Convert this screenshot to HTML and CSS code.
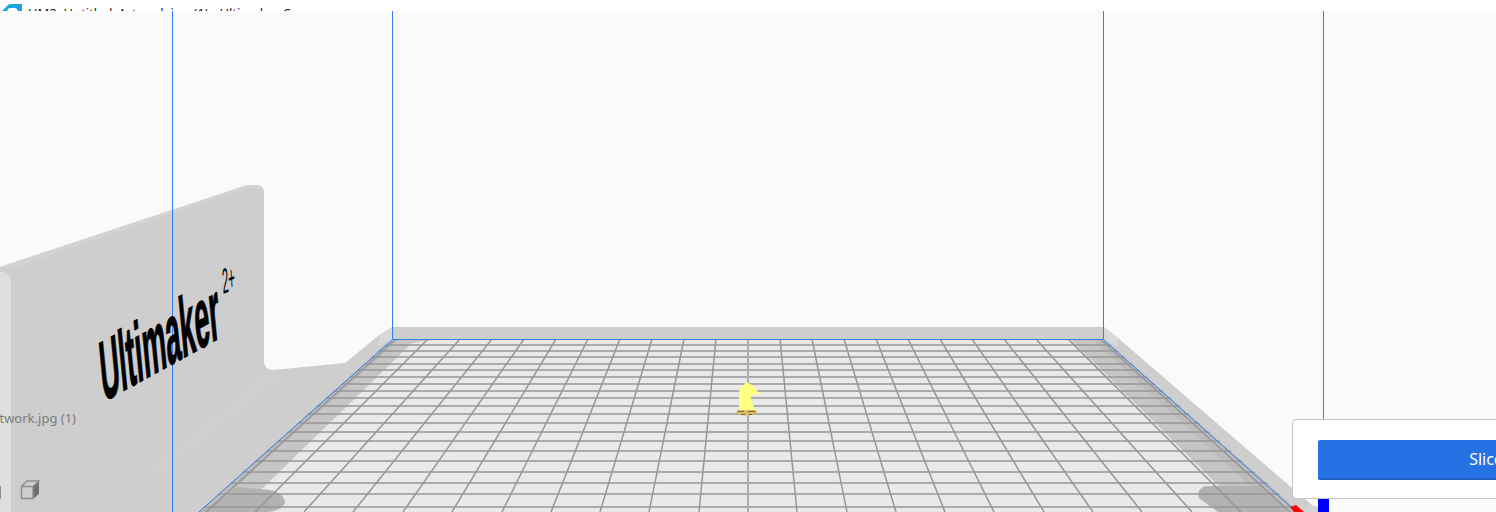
FILE: index.html
```html
<!DOCTYPE html>
<html lang="en">
<head>
    <meta charset="UTF-8">
    <title>UM2: Untitled_Artwork.jpg (1) - Ultimaker Cura</title>
    <link rel="stylesheet" href="styles.css">
</head>
<body>
    <div class="titlebar">
        <svg class="app-logo" width="22" height="11" viewBox="0 0 22 11">
            <path d="M2 11 L8 5 Q9 4 11 4 H22 V11 H18 Q17 8 15 8 H10 Q8 8 7 11 Z" fill="#1ba5e0"/>
        </svg>
        <span class="app-title">UM2: Untitled_Artwork.jpg (1) - Ultimaker Cura</span>
    </div>

    <div class="viewport">
        <svg class="scene" width="1496" height="501" viewBox="0 11 1496 501">
            <defs>
                <clipPath id="bedClip">
                    <path d="M392 339 H1104 L1300 512 H198 Z"/>
                </clipPath>
            </defs>

            <!-- printer back panel -->
            <path class="panel" d="M0 267 L244 186 Q250 184.500 258 185 Q264 186 264 192 V362 Q265 370 273 370 L345 363 L378 336 L392 327 V512 H0 Z"/>
            <path class="panel-top" d="M0 267 L244 186 Q250 184.500 258 185 L262 189 Q250 188 240 190 L10 269 Z"/>
            <path class="panel-side" d="M0 272 H4 Q11 274 11 282 V512 H0 Z"/>
            <path class="panel-ridge" d="M264 374 L150 470 V482 L290 372 Z"/>
            <path class="panel" d="M392 327 H1104 L1118 338 L1320 512 H1290 L1104 345 H392 Z"/>
            <path class="panel-corner" d="M392 327 L380 336 L378 346 L392 339 Z"/>
            <path class="panel-corner" d="M1104 327 L1118 338 L1118 347 L1104 339 Z"/>

            <!-- build plate -->
            <path class="plate" d="M392 339 H1104 L1300 512 H198 Z"/>
            <g clip-path="url(#bedClip)">
                <path class="zone" d="M392 339 H440 L412 343 L238 512 H190 Z"/>
                <path class="zone" d="M1056 339 H1104 L1300 512 H1245 L1070 339 Z"/>
                <path class="zone-dark" d="M392 339 H400 L208 512 H190 Z"/>
                <path class="zone-dark" d="M1092 339 H1104 L1300 512 H1278 Z"/>
                <path class="blob" d="M237 487 L270 490 Q285 494 285 503 Q280 512 265 512 H200 Z"/>
                <path class="blob" d="M1205 486 Q1196 490 1199 498 L1218 512 H1290 L1262 486 Z"/>

                <path class="grid-h" d="M190 345H1310M190 351H1310M190 357H1310M190 364H1310M190 370H1310M190 377H1310M190 384H1310M190 391H1310M190 398H1310M190 406H1310M190 414H1310M190 423H1310M190 432H1310M190 441H1310M190 451H1310M190 461H1310M190 472H1310M190 483H1310M190 494H1310M190 507H1310"/>
                <path class="grid-v" d="M396 339L206 512M428 339L255 512M460 339L304 512M492 339L353 512M524 339L403 512M556 339L452 512M588 339L502 512M620 339L551 512M652 339L600 512M684 339L649 512M716 339L699 512M780 339L797 512M812 339L847 512M844 339L896 512M876 339L945 512M908 339L994 512M940 339L1044 512M972 339L1093 512M1004 339L1142 512M1036 339L1192 512M1068 339L1241 512M1100 339L1290 512"/>
                <path class="grid-center" d="M748 339V512"/>
            </g>

            <!-- bounding volume -->
            <path class="volume" d="M172.500 11V512M392.500 11V339.500H1103.500M392.500 339.500L199 512"/>
            <path class="volume" d="M1103.500 11V339.500L1291 507"/>
            <path class="volume" d="M1323.500 11V420"/>

            <!-- axes -->
            <rect class="axis-z" x="1318" y="499" width="11" height="13"/>
            <path class="axis-stub" d="M1302 512 L1306 507 Q1312 504 1318 507 V512 Z"/>
            <path class="axis-x" d="M1290 507 L1296 505 L1304 512 H1294 Z"/>

            <!-- logo on the back panel -->
            <text class="logo-word" transform="matrix(0.42 -0.23 0.13 1.35 103 402)">Ultimaker</text>
            <text class="logo-sup" transform="matrix(0.5 -0.2 0.1 1.6 223 294)">2+</text>

            <!-- model on the plate -->
            <ellipse class="raft" cx="746.500" cy="412" rx="10.500" ry="3.500"/>
            <path class="raft-edge" d="M738 411.500H744M748 411.500H755M741 414.500H745M749 414.500H752"/>
            <path class="model" d="M739 410 V392 Q740 387 744 385 L746 381 L748 383 Q754 385 757 391 L760 393 L757 395 L751 394 Q750 398 752 402 L755 410 Z"/>

            <!-- cube icon of the view toolbar -->
            <g class="cube-icon">
                <path class="cube-side" d="M33 486 L39 481 V494 L33 499 Z"/>
                <path class="cube-line" d="M21.500 486.500 H33 V498.500 H21.500 Z M21.500 486.500 L27 481 H39 L33 486.500"/>
            </g>
            <rect class="cube-line-fill" x="0" y="486" width="1" height="13"/>
        </svg>

        <div class="object-name">UM2_Untitled_Artwork.jpg (1)</div>

        <div class="action-panel">
            <button class="slice-button">Slice</button>
        </div>
    </div>
</body>
</html>
```

FILE: styles.css
```css
:root {
    --stage: #fafafa;
    --panel: #cecece;
    --primary: #2671e4;
}

html, body {
    margin: 0;
    height: 100%;
    overflow: hidden;
}

body {
    display: flex;
    flex-direction: column;
    background: #ffffff;
    font-family: "Noto Sans", sans-serif;
}

.titlebar {
    display: flex;
    flex: 0 0 11px;
    height: 11px;
    overflow: hidden;
    background: #ffffff;
}

.app-logo {
    flex: none;
    margin-right: 6px;
}

.app-title {
    margin-top: 4px;
    font-size: 13px;
    line-height: 18px;
    color: #1c1c1c;
    white-space: nowrap;
}

.viewport {
    position: relative;
    flex: 1;
    overflow: hidden;
    background: var(--stage);
}

.scene {
    display: block;
}

.panel { fill: var(--panel); }
.panel-top { fill: #d3d3d3; }
.panel-side { fill: #dedede; }
.panel-ridge { fill: #cfcfcf; }
.panel-corner { fill: #d8d8d8; }

.plate { fill: #e9e9e9; }
.zone { fill: #c6c6c6; }
.zone-dark { fill: #bcbcbc; }
.blob { fill: #b2b2b2; }

.grid-h, .grid-v {
    fill: none;
    stroke: #969696;
    stroke-width: 1.5;
}

.grid-center {
    fill: none;
    stroke: #aeaeae;
    stroke-width: 2;
}

.volume {
    fill: none;
    stroke: #2f80f5;
    stroke-width: 1;
}

.axis-z { fill: #0000ff; }
.axis-x { fill: #ff0000; }
.axis-stub { fill: #d4d4d4; }

.logo-word {
    font-family: "Liberation Sans", sans-serif;
    font-size: 62px;
    font-weight: 700;
    fill: #000000;
    stroke: #000000;
    stroke-width: 1;
}

.logo-sup {
    font-family: "Liberation Sans", sans-serif;
    font-size: 22px;
    fill: #000000;
}

.model { fill: #ffff80; }
.raft { fill: #d8bd68; }

.raft-edge {
    fill: none;
    stroke: #7a6a30;
    stroke-width: 1;
}

.cube-side { fill: #6e6e6e; }

.cube-line {
    fill: none;
    stroke: #8f8f8f;
    stroke-width: 1.5;
}

.cube-line-fill { fill: #8f8f8f; }

.object-name {
    position: absolute;
    right: calc(100% - 76px);
    top: 398px;
    font-size: 13px;
    line-height: 18px;
    color: #7b7b7b;
    white-space: nowrap;
}

.action-panel {
    position: absolute;
    left: 1292px;
    top: 408px;
    box-sizing: border-box;
    width: 380px;
    height: 80px;
    padding: 20px 25px;
    background: #ffffff;
    border: 1px solid #c4c4c4;
    border-radius: 4px;
}

.slice-button {
    display: block;
    width: 336px;
    height: 40px;
    padding: 0;
    border: none;
    border-bottom: 2px solid #1f5fc4;
    border-radius: 2px;
    background: var(--primary);
    color: #ffffff;
    font-family: inherit;
    font-size: 16px;
}
```
